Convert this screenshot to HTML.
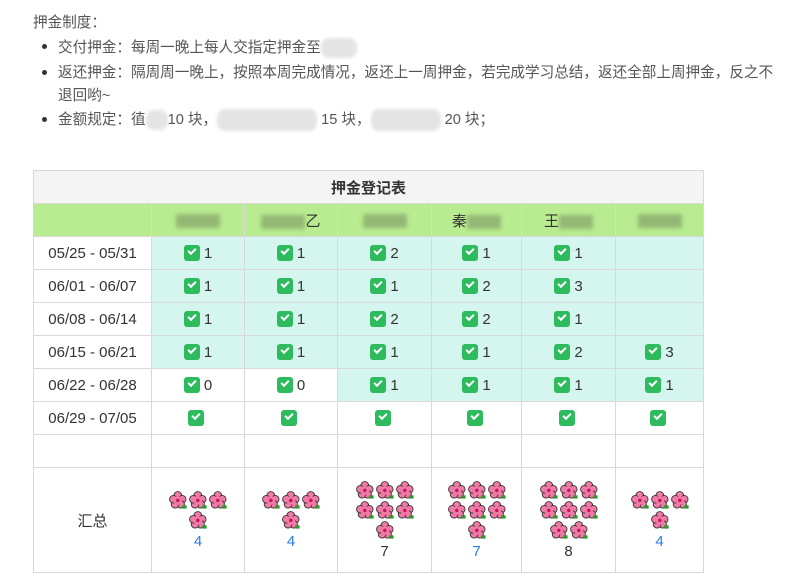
<!DOCTYPE html><html><head><meta charset="utf-8"><style>
body{margin:0;background:#fff;font-family:"Liberation Sans","Noto Sans CJK SC",sans-serif;font-size:14.6px;color:#555;width:789px;height:588px;overflow:hidden;position:relative}
.t{position:absolute;white-space:nowrap}
.b{position:absolute;width:5px;height:5px;border-radius:50%;background:#333}
.blur{display:inline-block;background:#e4e4e4;border-radius:8px;filter:blur(1.5px);vertical-align:middle}
table{position:absolute;left:33px;top:170px;border-collapse:collapse;table-layout:fixed}
td{border:1px solid #d9d9d9;text-align:center;padding:0;height:32px;color:#333;font-size:15px}
.tt{background:#f4f4f4;font-weight:bold}
.h{background:#b9ec90}
.g{background:#d5f5ef}
.c{display:inline-block;width:16px;height:16px;background:#2dbb5e;border-radius:3px;vertical-align:-3px;position:relative;margin-right:4px}
.c:after{content:"";position:absolute;left:4px;top:3px;width:6px;height:3px;border-left:2px solid #fff;border-bottom:2px solid #fff;transform:rotate(-45deg)}
.nm{display:inline-block;width:44px;height:14px;background:#8aab6e;filter:blur(2px);opacity:.8;vertical-align:middle}
.f{display:inline-block;width:18px;height:18px;margin:1px 1px;vertical-align:middle}
.blue{color:#2a7ee0}
</style></head><body>
<svg width="0" height="0" style="position:absolute"><defs><g id="fl" transform="scale(1.1)"><circle cx="8" cy="4" r="3.5" fill="#f27aa6" stroke="#333" stroke-width=".8"/><circle cx="12" cy="7.5" r="3.5" fill="#f27aa6" stroke="#333" stroke-width=".8"/><circle cx="10.5" cy="12" r="3.5" fill="#f27aa6" stroke="#333" stroke-width=".8"/><circle cx="5.5" cy="12" r="3.5" fill="#f27aa6" stroke="#333" stroke-width=".8"/><circle cx="4" cy="7.5" r="3.5" fill="#f27aa6" stroke="#333" stroke-width=".8"/><circle cx="8" cy="8.5" r="4" fill="#f27aa6"/><circle cx="8" cy="8.5" r="1.6" fill="#c21860"/><path d="M12 13l4 0 0 3-4 0z" fill="#2a9a2a"/></g></defs></svg>
<div class="t" style="left:33px;top:11px">押金制度：</div>
<div class="b" style="left:42px;top:44px"></div><div class="t" style="left:58px;top:36px">交付押金：每周一晚上每人交指定押金至<span class="blur" style="width:36px;height:20px"></span></div>
<div class="b" style="left:42px;top:70px"></div><div class="t" style="left:58px;top:61px">返还押金：隔周周一晚上，按照本周完成情况，返还上一周押金，若完成学习总结，返还全部上周押金，反之不</div>
<div class="t" style="left:58px;top:84px">退回哟~</div>
<div class="b" style="left:42px;top:117px"></div><div class="t" style="left:58px;top:108px">金额规定：徝<span class="blur" style="width:22px;height:20px"></span>10 块，<span class="blur" style="width:100px;height:22px"></span> 15 块，<span class="blur" style="width:70px;height:22px"></span> 20 块；</div>
<table>
<colgroup><col style="width:118px"><col style="width:93px"><col style="width:93px"><col style="width:94px"><col style="width:90px"><col style="width:94px"><col style="width:88px"></colgroup>
<tr><td class="tt" colspan="7">押金登记表</td></tr>
<tr class="h"><td></td><td><span class="nm"></span></td><td><span class="nm"></span>乙</td><td><span class="nm"></span></td><td>秦<span class="nm" style="width:34px"></span></td><td>王<span class="nm" style="width:34px"></span></td><td><span class="nm"></span></td></tr>
<tr><td>05/25 - 05/31</td><td class="g"><i class="c"></i>1</td><td class="g"><i class="c"></i>1</td><td class="g"><i class="c"></i>2</td><td class="g"><i class="c"></i>1</td><td class="g"><i class="c"></i>1</td><td class="g"></td></tr>
<tr><td>06/01 - 06/07</td><td class="g"><i class="c"></i>1</td><td class="g"><i class="c"></i>1</td><td class="g"><i class="c"></i>1</td><td class="g"><i class="c"></i>2</td><td class="g"><i class="c"></i>3</td><td class="g"></td></tr>
<tr><td>06/08 - 06/14</td><td class="g"><i class="c"></i>1</td><td class="g"><i class="c"></i>1</td><td class="g"><i class="c"></i>2</td><td class="g"><i class="c"></i>2</td><td class="g"><i class="c"></i>1</td><td class="g"></td></tr>
<tr><td>06/15 - 06/21</td><td class="g"><i class="c"></i>1</td><td class="g"><i class="c"></i>1</td><td class="g"><i class="c"></i>1</td><td class="g"><i class="c"></i>1</td><td class="g"><i class="c"></i>2</td><td class="g"><i class="c"></i>3</td></tr>
<tr><td>06/22 - 06/28</td><td><i class="c"></i>0</td><td><i class="c"></i>0</td><td class="g"><i class="c"></i>1</td><td class="g"><i class="c"></i>1</td><td class="g"><i class="c"></i>1</td><td class="g"><i class="c"></i>1</td></tr>
<tr><td>06/29 - 07/05</td><td><i class="c"></i></td><td><i class="c"></i></td><td><i class="c"></i></td><td><i class="c"></i></td><td><i class="c"></i></td><td><i class="c"></i></td></tr>
<tr><td></td><td></td><td></td><td></td><td></td><td></td><td></td></tr>
<tr><td style="height:104px">汇总</td>
<td><div style="width:66px;margin:0 auto"><svg class="f"><use href="#fl"/></svg><svg class="f"><use href="#fl"/></svg><svg class="f"><use href="#fl"/></svg><svg class="f"><use href="#fl"/></svg></div><div class="blue" style="margin-top:3px">4</div></td>
<td><div style="width:66px;margin:0 auto"><svg class="f"><use href="#fl"/></svg><svg class="f"><use href="#fl"/></svg><svg class="f"><use href="#fl"/></svg><svg class="f"><use href="#fl"/></svg></div><div class="blue" style="margin-top:3px">4</div></td>
<td><div style="width:66px;margin:0 auto"><svg class="f"><use href="#fl"/></svg><svg class="f"><use href="#fl"/></svg><svg class="f"><use href="#fl"/></svg><svg class="f"><use href="#fl"/></svg><svg class="f"><use href="#fl"/></svg><svg class="f"><use href="#fl"/></svg><svg class="f"><use href="#fl"/></svg></div><div style="margin-top:3px">7</div></td>
<td><div style="width:66px;margin:0 auto"><svg class="f"><use href="#fl"/></svg><svg class="f"><use href="#fl"/></svg><svg class="f"><use href="#fl"/></svg><svg class="f"><use href="#fl"/></svg><svg class="f"><use href="#fl"/></svg><svg class="f"><use href="#fl"/></svg><svg class="f"><use href="#fl"/></svg></div><div class="blue" style="margin-top:3px">7</div></td>
<td><div style="width:66px;margin:0 auto"><svg class="f"><use href="#fl"/></svg><svg class="f"><use href="#fl"/></svg><svg class="f"><use href="#fl"/></svg><svg class="f"><use href="#fl"/></svg><svg class="f"><use href="#fl"/></svg><svg class="f"><use href="#fl"/></svg><svg class="f"><use href="#fl"/></svg><svg class="f"><use href="#fl"/></svg></div><div style="margin-top:3px">8</div></td>
<td><div style="width:66px;margin:0 auto"><svg class="f"><use href="#fl"/></svg><svg class="f"><use href="#fl"/></svg><svg class="f"><use href="#fl"/></svg><svg class="f"><use href="#fl"/></svg></div><div class="blue" style="margin-top:3px">4</div></td>
</tr>
</table>
</body></html>
